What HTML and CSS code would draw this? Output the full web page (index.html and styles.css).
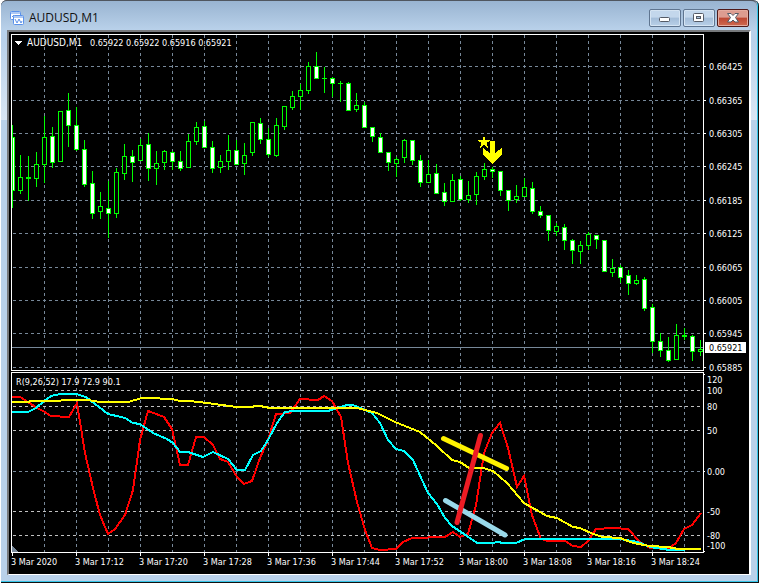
FILE: index.html
```html
<!DOCTYPE html>
<html lang="en">

<head>
  <meta charset="UTF-8">
  <meta name="viewport" content="width=device-width, initial-scale=1">
  <title>AUDUSD,M1</title>
  <link rel="stylesheet" href="styles.css">
</head>

<body>
  <main class="window">
    <header class="titlebar">
      <svg class="app-icon" viewBox="0 0 14 14" aria-hidden="true">
        <rect x="0.5" y="0.5" width="10" height="8" rx="1" fill="#fff" stroke="#5b92ea" />
        <path d="M1 2h9M2 6l2-2 1 2" fill="none" stroke="#5b92ea" />
        <rect x="3.5" y="4.5" width="10" height="9" rx="1" fill="#fff" stroke="#5b92ea" />
        <path d="M4 6h9" stroke="#5b92ea" />
        <path d="M5 8l2 4 2-4 2 4 1-2" fill="none" stroke="#5b92ea" />
      </svg>
      <h1 class="title">AUDUSD,M1</h1>
      <div class="controls">
        <button class="control" type="button" aria-label="Minimize">
          <svg viewBox="0 0 12 10">
            <rect x="0.5" y="4.5" width="10" height="4" rx="1" fill="#fff" stroke="#555b66" />
          </svg>
        </button>
        <button class="control" type="button" aria-label="Maximize">
          <svg viewBox="0 0 12 10">
            <rect x="0.5" y="0.5" width="10" height="8" rx="1" fill="#fff" stroke="#555b66" />
            <rect x="3.5" y="3.5" width="4" height="2" fill="#a9c2dc" stroke="#555b66" />
          </svg>
        </button>
        <button class="control close" type="button" aria-label="Close">
          <svg viewBox="0 0 12 10">
            <path d="M0.5 0.5h3.5l2 2 2-2h3.500l-3 4 3 4.500h-3.500l-2-2-2 2h-3.500l3-4.500z" fill="#fff" stroke="#555b66" />
          </svg>
        </button>
      </div>
    </header>

    <section class="client">
      <svg class="chart" id="price" viewBox="9 32 740 339" role="img" aria-label="AUDUSD M1 price">
        <g class="grid"></g>
        <path class="price-line" d="M12 347.500H703" />
        <g class="candles"></g>
        <path class="signal" d="M484 135l1.500 5h5.500l-4.500 3 2 5.500-4.500-3.500-4.500 3.500 2-5.500-4.500-3h5.500z" />
        <path class="signal" d="M490 141h5v12l7-5v6l-9 10h-1l-9-10v-6l7 5z" />
        <path class="frame" d="M11.500 371V34.500H703.500V370.500H11.500" />
        <path class="mark" d="M15 41h7l-3.500 4z" />
        <text class="label symbol" x="27" y="46">AUDUSD,M1</text>
        <text class="label" x="90" y="46">0.65922 0.65922 0.65916 0.65921</text>
        <g class="axis"></g>
        <rect class="mark" x="705" y="342" width="41" height="11" />
        <text class="label current" x="709" y="351">0.65921</text>
      </svg>
      <svg class="chart" id="oscillator" viewBox="9 371 740 203" role="img" aria-label="R(9,26,52) oscillator">
        <g class="grid"></g>
        <g class="levels"></g>
        <g class="lines"></g>
        <path class="stroke blue" d="M445.500 500.500L505 535" />
        <path class="stroke yellow" d="M443.500 438.500L506.500 468.500" />
        <path class="stroke red" d="M480.500 435.500L457 522.500" />
        <path class="corner" d="M12 546v6h6z" />
        <path class="frame" d="M11.500 372.500H703.500V552.500H11.500z" />
        <text class="label" x="16" y="385">R(9,26,52) 17.9 72.9 90.1</text>
        <g class="axis"></g>
        <g class="times"></g>
      </svg>
    </section>
  </main>
  <script src="chart.js"></script>
</body>

</html>
```
FILE: styles.css
```css
* {
  box-sizing: border-box;
}

body {
  margin: 0;
  padding: 0 1px;
  background: #fff;
  font-family: "DejaVu Sans Condensed", "DejaVu Sans", sans-serif;
}

.window {
  padding: 0 8px 8px 6px;
  border-radius: 6px 6px 0 0;
  background: linear-gradient(#b9d1ea 40px, #d9e6f4 120px, #b9d1ea 120px);
  box-shadow: inset 0 1px #4a4f57, inset -1px -1px #111, inset -2px -2px #35c5e8;
}

/* title bar */
.titlebar {
  display: flex;
  align-items: center;
  height: 30px;
  margin: 0 -6px 0 -6px;
  padding: 5px 8px 0 9px;
  border-top: 1px solid #50565f;
  border-radius: 6px 6px 0 0;
  background: linear-gradient(#99b4d1, #b9d1ea);
}

.app-icon {
  width: 14px;
  height: 14px;
}

.title {
  flex: 1;
  margin: 0 0 0 5px;
  font: 400 12px/16px "Open Sans", sans-serif;
  color: #111;
}

.controls {
  display: flex;
  gap: 2px;
}

.control {
  display: flex;
  align-items: center;
  justify-content: center;
  width: 32px;
  height: 18px;
  padding: 0;
  border: 1px solid #5f7590;
  border-radius: 2px;
  background: linear-gradient(#c3d7ec 45%, #a3bdd9 50%, #b9d0e8);
  box-shadow: inset 0 0 0 1px #d5e4f3;
}

.control svg {
  width: 12px;
  height: 10px;
}

.close {
  border-color: #4f1a1a;
  background: linear-gradient(#dd9c90 45%, #bd4733 50%, #cf6a50);
  box-shadow: inset 0 0 0 1px #e5aca0;
}

/* charts */
.client {
  border-style: solid;
  border-width: 2px 2px 1px 2px;
  border-color: #77797c #fff #fff #77797c;
  background: #000;
}

.chart {
  display: block;
  width: 100%;
  height: auto;
  overflow: visible;
  shape-rendering: crispEdges;
}

.grid {
  fill: none;
  stroke: #778899;
  stroke-dasharray: 3 3;
}

.levels {
  fill: none;
  stroke: #c0c0c0;
  stroke-dasharray: 3 3;
}

.frame,
.tick {
  fill: none;
  stroke: #fff;
}

.price-line {
  stroke: #778899;
}

.candle {
  fill: #000;
  stroke: #0f0;
}

.candle.down {
  fill: #fff;
}

.signal {
  fill: #ff0;
}

.mark {
  fill: #fff;
}

.corner {
  fill: #778899;
}

.label {
  font-size: 9px;
  fill: #fff;
  white-space: pre;
}

.symbol {
  font-size: 10px;
}

.current {
  fill: #000;
}

.line {
  fill: none;
  stroke-width: 2;
}

.stroke {
  fill: none;
  stroke-width: 5;
  stroke-linecap: round;
  shape-rendering: auto;
}

.red {
  stroke: #ed1c24;
}

.yellow {
  stroke: #fff200;
}

.blue {
  stroke: #99d9ea;
}
```
FILE: chart.js
```js
const NS = 'http://www.w3.org/2000/svg';

function add(parent, tag, attrs, text) {
  const el = document.createElementNS(NS, tag);
  for (const key in attrs) el.setAttribute(key, attrs[key]);
  if (text) el.textContent = text;
  parent.appendChild(el);
}

// high, body top, body bottom, low, direction
const candles = `
125 137 191 208 d|155 177 191 194 u|156 177 179 201 u|152 164 179 187 u|116 137 165 183 u
127 136 163 168 d|111 111 162 162 u|93 110 126 147 d|107 125 150 151 d|140 149 185 187 d
171 183 214 219 d|192 206 212 219 u|181 208 214 238 d|168 172 214 218 u|144 156 174 180 u
150 156 163 182 d|139 145 161 161 u|133 144 169 181 d|151 163 169 185 u|150 151 163 170 u
151 152 162 170 d|151 161 169 171 d|134 141 168 168 u|122 127 142 145 u|121 126 148 148 d
141 147 169 173 d|155 161 168 173 u|135 150 162 170 u|140 150 165 165 d|143 155 164 175 u
122 122 153 156 u|118 123 140 144 d|128 139 155 157 d|118 125 156 157 u|106 106 127 130 u
91 96 108 110 u|84 90 97 110 u|62 66 91 94 u|52 66 79 79 d|67 78 79 93 u
77 78 84 97 d|81 83 84 102 u|82 83 111 111 d|93 105 110 112 u|102 105 128 128 d
127 127 137 142 d|133 137 153 153 d|152 152 163 171 d|157 159 164 177 u|139 140 158 163 u
140 140 161 165 d|155 160 183 187 d|160 174 183 183 u|164 173 194 194 d|183 192 202 206 d
174 180 202 202 u|176 179 200 201 d|181 195 200 203 u|172 176 195 205 u|163 169 177 180 u
167 169 172 178 d|171 171 191 196 d|190 190 201 211 d|185 196 200 203 u|178 187 197 197 u
182 188 212 214 d|206 211 216 218 d|215 215 231 241 d|223 226 232 236 u|224 227 241 250 d
239 240 251 264 d|241 245 252 264 u|232 234 246 250 u|235 235 240 249 d|240 240 272 272 d
259 268 273 277 u|265 267 278 283 d|270 275 284 295 d|275 280 284 285 u|277 279 309 311 d
304 307 342 353 d|333 341 351 357 d|337 350 361 362 d|324 335 360 360 u|328 335 337 340 u
335 336 352 361 d|340 349 352 356 u`;

const prices = [
  [66, '0.66425'], [100, '0.66365'], [133, '0.66305'], [166, '0.66245'], [200, '0.66185'],
  [233, '0.66125'], [267, '0.66065'], [300, '0.66005'], [333, '0.65945'], [367, '0.65885']
];

const scale = [
  [379, '120'], [390, '100'], [406, '80'], [430, '50'], [471, '0.00'], [511, '-50'], [535, '-80'], [545, '-100']
];

const times = ['2020', '17:12', '17:20', '17:28', '17:36', '17:44', '17:52', '18:00', '18:08', '18:16', '18:24'];

const lines = {
  '#f00': `12,397 20,397 28,402 37,408 43,411 51,416 69,417 77,403 80,422 85,453 93,488 100,515 108,534 115,529
    125,515 133,490 140,440 148,411 164,417 172,429 180,465 188,465 196,437 204,437 213,445 220,459 228,462
    237,477 244,484 252,481 260,458 268,440 276,414 290,413 300,399 318,400 324,396 332,401 341,417 348,463
    357,502 365,530 372,548 380,550 396,549 403,542 412,538 445,537 453,532 460,537 468,534 476,505 484,453
    492,433 500,423 508,448 517,487 524,476 532,515 541,539 548,541 565,541 573,546 581,547 588,541 596,529
    613,528 628,529 640,542 650,548 668,549 676,543 684,529 692,525 701,513`,
  '#0ff': `12,412 28,412 36,408 44,401 51,396 60,394 76,394 86,397 108,414 125,418 133,423 140,424 153,433
    167,439 173,443 180,452 188,452 203,457 213,452 228,459 237,470 245,470 253,455 261,451 268,440 277,423
    285,412 293,411 328,411 347,405 353,405 372,413 380,423 388,440 396,449 404,451 413,460 428,493 437,504
    445,518 452,526 467,536 477,543 492,543 498,542 503,543 516,543 525,539 620,539 638,542 650,547 663,549
    670,550 685,550`,
  '#ff0': `12,402 28,402 31,401 60,401 62,400 88,400 100,402 128,402 142,398 148,398 172,399 180,401 190,401
    207,403 222,405 237,407 252,407 255,406 260,406 270,408 357,408 365,410 377,413 395,422 420,432 437,446
    452,460 460,462 469,468 483,468 493,471 507,483 524,503 547,516 557,518 573,527 580,528 593,534 603,537
    620,538 633,543 650,546 668,547 678,549 701,549`
};

const price = document.getElementById('price');
const osc = document.getElementById('oscillator');

// grid
for (let x = 44; x < 703; x += 32) {
  add(price.querySelector('.grid'), 'path', { d: `M${x + 0.5} 35V370` });
  add(osc.querySelector('.grid'), 'path', { d: `M${x + 0.5} 376V552` });
}
add(osc.querySelector('.grid'), 'path', { d: 'M13 471.5H703' });
[390, 406, 430, 511, 535].forEach(y => {
  add(osc.querySelector('.levels'), 'path', { d: `M13 ${y + 0.5}H703` });
});

// price scale
prices.forEach(([y, text]) => {
  add(price.querySelector('.grid'), 'path', { d: `M13 ${y + 0.5}H703` });
  add(price.querySelector('.axis'), 'path', { class: 'tick', d: `M704 ${y + 0.5}h2` });
  add(price.querySelector('.axis'), 'text', { class: 'label', x: 709, y: y + 4 }, text);
});

// candles
candles.trim().split(/[|\n]/).forEach((row, i) => {
  const [high, top, bottom, low, dir] = row.trim().split(' ');
  const x = 12 + i * 8;
  const left = i ? x - 2 : x;
  const group = price.querySelector('.candles');
  add(group, 'path', { class: 'candle', d: `M${x + 0.5} ${high}V${low}` });
  if (bottom - top < 3) {
    add(group, 'rect', { fill: '#0f0', x: left, y: top, width: 5, height: bottom - top });
    return;
  }
  add(group, 'rect', {
    class: dir === 'd' ? 'candle down' : 'candle',
    x: left + 0.5, y: +top + 0.5, width: x + 2 - left, height: bottom - top - 1
  });
});

// oscillator
for (const color in lines) {
  add(osc.querySelector('.lines'), 'polyline', { class: 'line', stroke: color, points: lines[color] });
}
scale.forEach(([y, text]) => {
  add(osc.querySelector('.axis'), 'text', { class: 'label', x: 707, y: y + 4 }, text);
});
[374, 471, 551].forEach(y => {
  add(osc.querySelector('.axis'), 'path', { class: 'tick', d: `M704 ${y + 0.5}h1` });
});
times.forEach((time, i) => {
  const x = 12 + i * 64;
  add(osc.querySelector('.times'), 'path', { class: 'tick', d: `M${x + 0.5} 553v3` });
  add(osc.querySelector('.times'), 'text', { class: 'label', x: x - 1, y: 565 }, '3 Mar ' + time);
});
```
